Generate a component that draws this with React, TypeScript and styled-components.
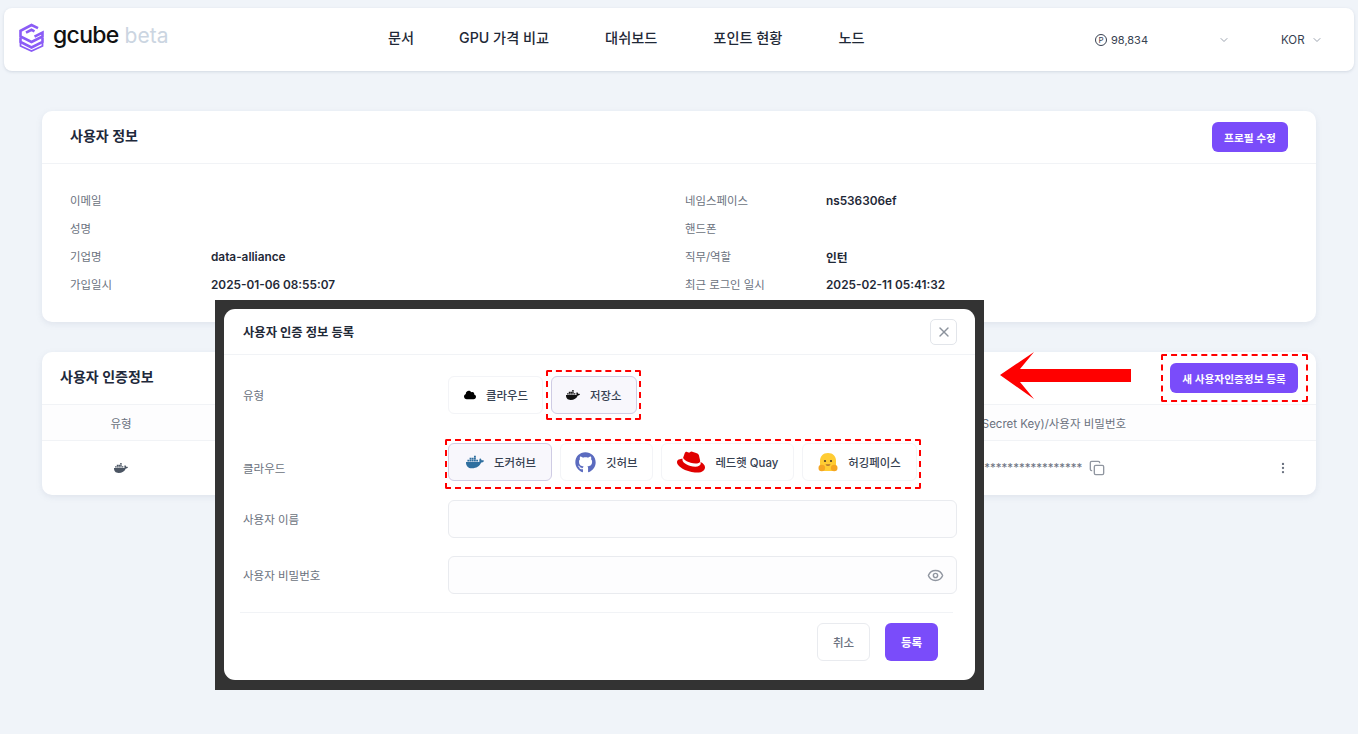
import styled, { createGlobalStyle } from "styled-components";
import { ChevronDown, Copy, EllipsisVertical, Eye, X } from "lucide-react";
import { FaCloud, FaDocker, FaGithub, FaRedhat } from "react-icons/fa";

const FONT = `Inter, "Noto Sans CJK KR", sans-serif`;
const PURPLE = "#7a4cfa";

const GlobalStyle = createGlobalStyle`
  html, body {
    margin: 0;
    padding: 0;
    height: 734px;
    overflow: hidden;
    background: #f0f4f9;
    font-family: ${FONT};
    color: #1f2937;
  }
  * { box-sizing: border-box; }
`;

const Page = styled.div`
  position: relative;
  width: 1358px;
  height: 734px;
  padding-top: 8px;
`;

const TopBar = styled.header`
  margin: 0 4px;
  width: 1350px;
  height: 63px;
  background: #fff;
  border-radius: 8px;
  box-shadow: 0 1px 3px rgba(120, 135, 160, 0.25);
  display: grid;
  grid-template-columns: 384px 707px 1fr;
  align-items: center;
`;

const Brand = styled.div`
  display: flex;
  align-items: center;
  gap: 8px;
  padding: 0 0 5px 14px;
`;

const BrandName = styled.span`
  font-size: 23px;
  font-weight: 500;
  letter-spacing: -0.7px;
  color: #111;
  line-height: 1;
  padding-bottom: 3px;
  b {
    font-weight: 400;
    color: #cbd5e1;
    margin-left: 6px;
    font-size: 21px;
    letter-spacing: 0;
  }
`;

const Nav = styled.nav`
  display: flex;
  gap: 56px;
  padding-bottom: 6px;
  font-size: 14.2px;
  font-weight: 500;
  color: #1f2937;
  span:first-child {
    margin-right: -11px;
  }
`;

const Account = styled.div`
  display: flex;
  align-items: center;
  font-size: 11px;
  color: #374151;
  padding-top: 1px;
`;

const Points = styled.span`
  display: flex;
  align-items: center;
  gap: 4px;
  width: 123px;
`;

const PointMark = styled.span`
  width: 12px;
  height: 12px;
  border: 1px solid #374151;
  border-radius: 50%;
  font-size: 8px;
  line-height: 10px;
  text-align: center;
`;

const Language = styled.span`
  display: flex;
  align-items: center;
  gap: 6px;
  margin-left: 51px;
  font-size: 11.5px;
`;

const Main = styled.main`
  padding: 40px 42px 0;
  display: flex;
  flex-direction: column;
  gap: 30px;
`;

const Card = styled.section`
  background: #fff;
  border-radius: 10px;
  box-shadow: 0 2px 6px rgba(120, 135, 160, 0.14);
`;

const CardHead = styled.div<{ $inset: number }>`
  height: 53px;
  padding: 0 ${(p) => p.$inset}px;
  display: flex;
  align-items: center;
  justify-content: space-between;
  border-bottom: 1px solid #f1f3f6;
`;

const CardTitle = styled.h2`
  margin: 0;
  padding-bottom: 4px;
  font-size: 14px;
  font-weight: 600;
  color: #1e293b;
`;

const PrimaryButton = styled.button<{ $width: number }>`
  width: ${(p) => p.$width}px;
  height: 30px;
  border: none;
  border-radius: 6px;
  background: ${PURPLE};
  color: #fff;
  font-family: ${FONT};
  font-size: 10.7px;
  font-weight: 600;
`;

const InfoGrid = styled.dl`
  margin: 0;
  padding: 22px 28px 24px;
  height: 158px;
  display: grid;
  grid-template-columns: 141px 474px 141px 1fr;
  grid-auto-rows: 28px;
  align-items: center;
`;

const InfoLabel = styled.dt`
  font-size: 11.4px;
  color: #6b7280;
`;

const InfoValue = styled.dd`
  margin: 0;
  padding-top: 1px;
  font-size: 11.8px;
  font-weight: 600;
  color: #1f2937;
`;

const TableRow = styled.div<{ $head?: boolean }>`
  height: ${(p) => (p.$head ? 36 : 54)}px;
  display: grid;
  grid-template-columns: 158px 732px 340px 1fr;
  align-items: center;
  font-size: 11.5px;
  color: #6b7280;
  background: ${(p) => (p.$head ? "#fdfdfe" : "transparent")};
  border-bottom: ${(p) => (p.$head ? "1px solid #f1f3f6" : "none")};
`;

const TypeCell = styled.div`
  display: flex;
  justify-content: center;
`;

const SecretCell = styled.div<{ $offset: number }>`
  display: flex;
  align-items: center;
  gap: 7px;
  padding-left: ${(p) => p.$offset}px;
  white-space: nowrap;
`;

const MenuCell = styled.div`
  display: flex;
  padding-left: 4px;
  color: #6b7280;
`;

const ModalFrame = styled.div`
  position: absolute;
  left: 215px;
  top: 300px;
  width: 769px;
  height: 390px;
  padding: 9px 9px 10px;
  background: #333;
`;

const Modal = styled.div`
  height: 100%;
  background: #fff;
  border-radius: 11px;
  display: flex;
  flex-direction: column;
`;

const ModalHead = styled.div`
  height: 46px;
  flex: none;
  padding: 0 18px 0 19px;
  display: flex;
  align-items: center;
  justify-content: space-between;
  border-bottom: 1px solid #f1f3f6;
`;

const ModalTitle = styled.h3`
  margin: 0;
  font-size: 12.3px;
  font-weight: 600;
  color: #1f2937;
`;

const CloseButton = styled.button`
  width: 27px;
  height: 26px;
  padding: 0;
  display: flex;
  align-items: center;
  justify-content: center;
  background: #fff;
  border: 1px solid #e2e5ea;
  border-radius: 5px;
  color: #8b929c;
`;

const Form = styled.div`
  padding: 21px 18px 0 19px;
  display: flex;
  flex-direction: column;
`;

const FormRow = styled.div<{ $gap: number }>`
  display: grid;
  grid-template-columns: 205px 1fr;
  align-items: center;
  margin-bottom: ${(p) => p.$gap}px;
`;

const FieldLabel = styled.span<{ $drop?: number }>`
  font-size: 11.5px;
  color: #6b7280;
  padding-top: ${(p) => p.$drop ?? 0}px;
`;

const Choices = styled.div`
  display: flex;
  gap: 8px;
`;

const Marked = styled.div<{ $inset: string }>`
  position: relative;
  display: flex;
  gap: 8px;
  width: fit-content;
  &::after {
    content: "";
    position: absolute;
    inset: ${(p) => p.$inset};
    border: 2px dashed #ff0000;
    border-radius: 2px;
    pointer-events: none;
  }
`;

const Choice = styled.button<{ $selected?: boolean; $gap: number; $left: number; $right?: number }>`
  height: 38px;
  padding: 0 ${(p) => p.$right ?? 15}px 0 ${(p) => p.$left}px;
  display: flex;
  align-items: center;
  gap: ${(p) => p.$gap}px;
  font-family: ${FONT};
  font-size: 11.4px;
  font-weight: 500;
  white-space: nowrap;
  color: #374151;
  border-radius: 6px;
  border: 1px solid ${(p) => (p.$selected ? "#cfcce4" : "#f3f4f7")};
  background: ${(p) => (p.$selected ? "#f8f7fc" : "#fff")};
`;

const TextBox = styled.div`
  height: 38px;
  display: flex;
  align-items: center;
  justify-content: flex-end;
  padding-right: 12px;
  background: #fdfdfe;
  border: 1px solid #e9ebef;
  border-radius: 6px;
  color: #9096a0;
`;

const ModalFoot = styled.div`
  margin: 0 22px 0 16px;
  padding: 10px 15px 0 0;
  display: flex;
  justify-content: flex-end;
  gap: 15px;
  border-top: 1px solid #f1f3f6;
`;

const FootButton = styled.button<{ $primary?: boolean }>`
  width: 53px;
  height: 38px;
  font-family: ${FONT};
  font-size: 11.5px;
  font-weight: ${(p) => (p.$primary ? 600 : 500)};
  border-radius: 6px;
  color: ${(p) => (p.$primary ? "#fff" : "#6b7280")};
  background: ${(p) => (p.$primary ? PURPLE : "#fff")};
  border: ${(p) => (p.$primary ? "none" : "1px solid #e9ebef")};
`;

const Arrow = styled.svg`
  position: absolute;
  left: 1000px;
  top: 352px;
`;

const NewCredential = styled.div`
  position: relative;
  &::after {
    content: "";
    position: absolute;
    inset: -9px -10px -9px -9px;
    border: 2px dashed #ff0000;
    border-radius: 2px;
    pointer-events: none;
  }
`;

const GcubeMark = () => (
  <svg width="27" height="29" viewBox="0 0 27 29" fill="none" stroke="#8b5cf6" strokeWidth="2.6">
    <path d="M20 5.200 13.500 2 2.500 7.800v5.600l11 5.600 11-5.600V9.600l-8 4" />
    <path d="M8 9.600l5.500-2.800 3 1.500" />
    <path d="M2.500 14.500v4.400l11 5.600 11-5.600v-4.400" />
    <path d="M2.500 20v3l11 5 11-5v-3" strokeWidth="1.800" />
  </svg>
);

const HuggingFace = () => (
  <svg width="20" height="20" viewBox="0 0 20 20">
    <path d="M10 1c5 0 8 3.500 8 8v7c0 2-2 3-4 3H6c-2 0-4-1-4-3V9c0-4.500 3-8 8-8Z" fill="#ffcc33" />
    <ellipse cx="3.800" cy="16" rx="3.300" ry="3.200" fill="#f5a623" />
    <ellipse cx="16.200" cy="16" rx="3.300" ry="3.200" fill="#f5a623" />
    <circle cx="7" cy="9" r="1.100" fill="#4a3b2a" />
    <circle cx="13" cy="9" r="1.100" fill="#4a3b2a" />
    <path d="M7.500 12.500c1 1.600 4 1.600 5 0Z" fill="#8a4b2e" />
  </svg>
);

const infoRows = [
  ["이메일", "", "네임스페이스", "ns536306ef"],
  ["성명", "", "핸드폰", ""],
  ["기업명", "data-alliance", "직무/역할", "인턴"],
  ["가입일시", "2025-01-06 08:55:07", "최근 로그인 일시", "2025-02-11 05:41:32"],
];

export default function App() {
  return (
    <Page>
      <GlobalStyle />
      <TopBar>
        <Brand>
          <GcubeMark />
          <BrandName>
            gcube<b>beta</b>
          </BrandName>
        </Brand>
        <Nav>
          <span>문서</span>
          <span>GPU 가격 비교</span>
          <span>대쉬보드</span>
          <span>포인트 현황</span>
          <span>노드</span>
        </Nav>
        <Account>
          <Points>
            <PointMark>P</PointMark>
            98,834
          </Points>
          <ChevronDown size={12} color="#9ca3af" />
          <Language>
            KOR <ChevronDown size={12} color="#9ca3af" />
          </Language>
        </Account>
      </TopBar>

      <Main>
        <Card>
          <CardHead $inset={28}>
            <CardTitle>사용자 정보</CardTitle>
            <PrimaryButton $width={76}>프로필 수정</PrimaryButton>
          </CardHead>
          <InfoGrid>
            {infoRows.map((row) =>
              row.map((text, i) =>
                i % 2 === 0 ? (
                  <InfoLabel key={text}>{text}</InfoLabel>
                ) : (
                  <InfoValue key={row[i - 1] + "-value"}>{text}</InfoValue>
                )
              )
            )}
          </InfoGrid>
        </Card>

        <Card>
          <CardHead $inset={18}>
            <CardTitle>사용자 인증정보</CardTitle>
            <NewCredential>
              <PrimaryButton $width={128}>새 사용자인증정보 등록</PrimaryButton>
            </NewCredential>
          </CardHead>
          <TableRow $head>
            <TypeCell>유형</TypeCell>
            <span />
            <SecretCell $offset={0}>액세스 키(Secret Key)/사용자 비밀번호</SecretCell>
            <span />
          </TableRow>
          <TableRow>
            <TypeCell>
              <FaDocker size={14} color="#4b5563" />
            </TypeCell>
            <span />
            <SecretCell $offset={12}>
              ************************
              <Copy size={16} color="#9096a0" />
            </SecretCell>
            <MenuCell>
              <EllipsisVertical size={14} />
            </MenuCell>
          </TableRow>
        </Card>
      </Main>

      <ModalFrame>
        <Modal>
          <ModalHead>
            <ModalTitle>사용자 인증 정보 등록</ModalTitle>
            <CloseButton>
              <X size={16} />
            </CloseButton>
          </ModalHead>
          <Form>
            <FormRow $gap={29}>
              <FieldLabel>유형</FieldLabel>
              <Choices>
                <Choice $gap={10} $left={15} $right={14}>
                  <FaCloud size={12} color="#000" />
                  클라우드
                </Choice>
                <Marked $inset="-6px -4px -6px -5px">
                  <Choice $selected $gap={10} $left={14}>
                    <FaDocker size={14} color="#111" />
                    저장소
                  </Choice>
                </Marked>
              </Choices>
            </FormRow>
            <FormRow $gap={19}>
              <FieldLabel $drop={12}>클라우드</FieldLabel>
              <Marked $inset="-4px -4px -8px -3px">
                <Choice $selected $gap={10} $left={17}>
                  <FaDocker size={18} color="#2f6f9f" />
                  도커허브
                </Choice>
                <Choice $gap={10} $left={14}>
                  <FaGithub size={21} color="#5b6bbf" />
                  깃허브
                </Choice>
                <Choice $gap={10} $left={15}>
                  <FaRedhat size={28} color="#e00000" />
                  레드햇 Quay
                </Choice>
                <Choice $gap={10} $left={15}>
                  <HuggingFace />
                  허깅페이스
                </Choice>
              </Marked>
            </FormRow>
            <FormRow $gap={18}>
              <FieldLabel>사용자 이름</FieldLabel>
              <TextBox />
            </FormRow>
            <FormRow $gap={18}>
              <FieldLabel>사용자 비밀번호</FieldLabel>
              <TextBox>
                <Eye size={17} />
              </TextBox>
            </FormRow>
          </Form>
          <ModalFoot>
            <FootButton>취소</FootButton>
            <FootButton $primary>등록</FootButton>
          </ModalFoot>
        </Modal>
      </ModalFrame>

      <Arrow width="132" height="48" viewBox="0 0 132 48">
        <path d="M0 23 34 0 20 17H131V30H20L34 47Z" fill="#ff0000" />
      </Arrow>
    </Page>
  );
}
